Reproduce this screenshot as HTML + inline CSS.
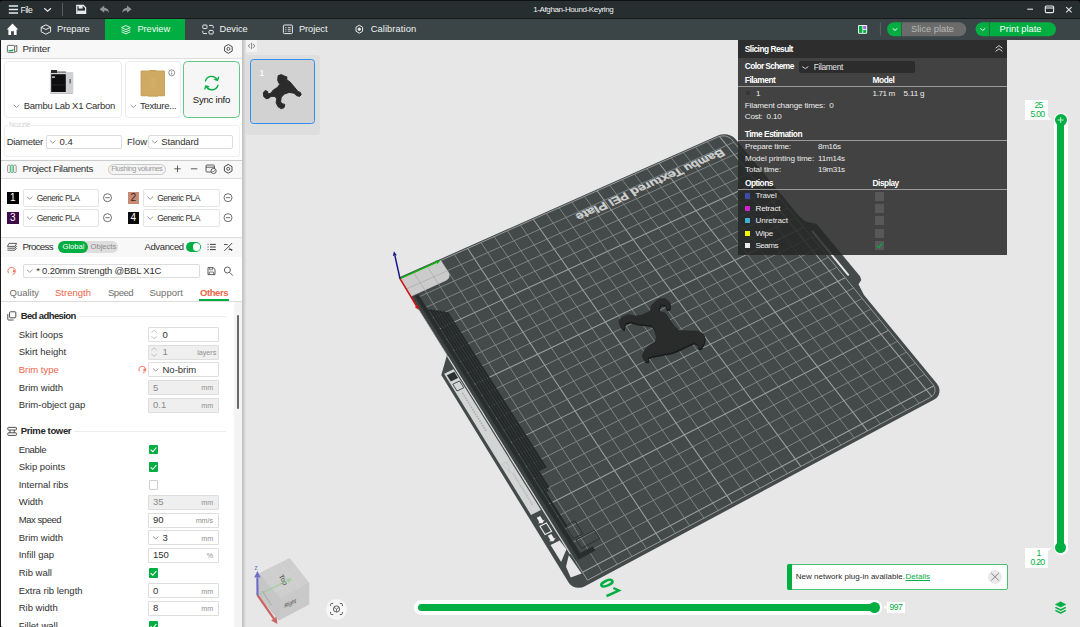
<!DOCTYPE html>
<html>
<head>
<meta charset="utf-8">
<style>
*{box-sizing:border-box;margin:0;padding:0}
html,body{width:1080px;height:627px;overflow:hidden;background:#e7e7e7;font-family:"Liberation Sans",sans-serif;font-size:9.5px;color:#303030}
.abs,.t,.b{position:absolute}
.t{white-space:pre;line-height:12px;height:12px;margin-top:-6px}
#titlebar{position:absolute;left:0;top:0;width:1080px;height:19px;background:#262e30;border-top:1px solid #0f1213;border-bottom:1px solid #15191a}
#tabbar{position:absolute;left:0;top:19px;width:1080px;height:21px;background:#3b4446}
#side{position:absolute;left:0;top:40px;width:242px;height:587px;background:#fff;overflow:hidden}
#sidegap{position:absolute;left:242px;top:40px;width:3.6px;height:587px;background:linear-gradient(to right,#c0c0c0,#cdcdcd 45%,#dedede 85%,#e7e7e7)}
#canvas{position:absolute;left:0;top:0;width:1080px;height:627px}
svg{position:absolute;overflow:visible}

</style>
</head>
<body>
<svg id="canvas" width="1080" height="627" viewBox="0 0 1080 627">
<path d="M398.8 277.5 L718.0 135.5 L721.0 134.5 L724.3 134.2 L727.5 134.5 L730.6 135.4 L733.3 136.9 L735.4 138.9 L798.1 215.1 L805.2 221.2 L816.7 224.0 L860.0 276.2 L861.3 279.9 L858.5 284.2 L863.8 294.8 L936.8 383.5 L938.6 386.3 L939.5 389.4 L939.4 392.5 L938.4 395.4 L936.5 397.9 L933.8 399.8 L584.9 586.2 L582.0 587.4 L578.8 587.8 L575.7 587.5 L572.9 586.4 L570.4 584.7 L568.6 582.5 L441.3 375.0 L447.0 355.0Z" fill="#44494a"/>
<path d="M550.6 544.9 L561.1 561.9 L566.5 549.3 L559.6 540.4Z" fill="#e7e7e7"/>
<path d="M568.8 555.2 L566.0 566.7 L570.7 577.6 L581.6 573.6Z" fill="#e7e7e7"/>
<path d="M444.1 373.7 L531.0 514.9 L540.9 509.9 L453.6 369.2Z" fill="#d3d4d4"/>
<path d="M446.9 375.3 L450.8 381.5 L458.1 378.0 L454.3 371.8Z" fill="#2c2f30"/>
<path d="M452.8 384.2 L457.0 391.0 L463.8 387.8 L459.6 381.0Z" fill="none" stroke="#2c2f30" stroke-width="0.8"/>
<path d="M462.5 392.9 L486.3 431.3" stroke="#a9abab" stroke-width="1.6" stroke-dasharray="1.5 1.2"/>
<path d="M513.0 473.2 L533.0 505.6" stroke="#b4b6b6" stroke-width="1.8" stroke-dasharray="1 1"/>
<path d="M502.1 464.3 L510.5 472.9 L507.1 461.8Z" fill="none" stroke="#bcbebe" stroke-width="0.6"/>
<path d="M539.9 526.3 L545.1 534.6 L551.6 531.2 L546.4 522.9Z" fill="none" stroke="#eeeeee" stroke-width="1.1"/>
<path d="M536.7 517.8 L539.4 522.3 L537.7 523.2 L542.4 523.3 L544.8 519.6 L543.0 520.5 L540.2 516.0Z" fill="#eeeeee"/>
<path d="M547.8 535.8 L550.5 540.3 L548.8 541.2 L553.5 541.3 L555.9 537.5 L554.1 538.5 L551.3 533.9Z" fill="#eeeeee"/>
<path d="M812.5 231.5 L848.2 274.8" stroke="#e7e7e7" stroke-width="2" stroke-linecap="round"/>
<path d="M406.5 289.0 L733.9 142.2 M413.7 272.5 L602.4 572.3 M413.0 299.6 L741.4 151.4 M427.3 266.4 L617.2 564.4 M419.6 310.2 L749.0 160.6 M440.8 260.4 L631.9 556.5 M426.3 320.9 L756.6 169.9 M454.3 254.4 L646.5 548.7 M439.8 342.7 L772.1 188.7 M481.0 242.5 L675.4 533.3 M446.7 353.7 L779.9 198.2 M494.2 236.7 L689.7 525.7 M453.6 364.8 L787.8 207.9 M507.3 230.8 L703.9 518.1 M460.6 376.1 L795.8 217.6 M520.4 225.0 L718.1 510.6 M474.8 398.9 L812.0 237.2 M546.3 213.5 L746.0 495.7 M482.0 410.5 L820.2 247.2 M559.1 207.8 L759.9 488.3 M489.3 422.2 L828.4 257.3 M571.8 202.1 L773.6 481.0 M496.6 434.0 L836.8 267.4 M584.5 196.4 L787.3 473.7 M511.5 458.0 L853.7 288.0 M609.7 185.2 L814.3 459.2 M519.1 470.2 L862.3 298.5 M622.2 179.7 L827.7 452.1 M526.8 482.5 L870.9 309.0 M634.5 174.1 L841.0 445.0 M534.5 494.9 L879.7 319.7 M646.9 168.7 L854.3 437.9 M550.2 520.1 L897.4 341.3 M671.3 157.8 L880.5 424.0 M558.1 533.0 L906.4 352.2 M683.4 152.4 L893.5 417.1 M566.2 545.9 L915.5 363.3 M695.5 147.0 L906.4 410.2 M574.3 559.0 L924.6 374.4 M707.5 141.7 L919.2 403.3" stroke="#878c8a" stroke-width="0.85" fill="none"/>
<path d="M433.0 331.7 L764.3 179.2 M467.7 248.5 L661.0 541.0 M467.7 387.5 L803.8 227.4 M533.3 219.2 L732.1 503.1 M504.0 446.0 L845.2 277.7 M597.1 190.8 L800.8 466.4 M542.3 507.5 L888.5 330.4 M659.1 163.2 L867.4 430.9 M582.5 572.2 L933.9 385.7 M719.4 136.4 L931.9 396.6" stroke="#9a9f9d" stroke-width="1.05" fill="none"/>
<path d="M400.0 278.6 L718.2 136.9 L720.5 136.2 L723.0 135.9 L725.6 136.1 L728.0 136.9 L730.1 138.0 L731.7 139.5 L933.0 384.6 L934.4 386.8 L935.0 389.2 L935.0 391.5 L934.2 393.8 L932.7 395.7 L930.6 397.2 L587.5 580.2Z" stroke="#9da19f" stroke-width="0.9" fill="none"/>
<path d="M447.0 356.4 L569.9 554.3 L570.8 553.9 L447.9 356.0Z" fill="#e2e3e3"/>
<path d="M411.9 297.4 L575.8 561.0 L579.2 559.2 L415.0 295.9Z" fill="#3c4142"/>
<path d="M414.7 296.1 L578.9 559.4 L595.5 550.6 L592.8 546.4 L580.3 553.1 L418.5 294.4Z" fill="#2a2d2e"/>
<path d="M429.2 309.9 L565.4 527.5 L567.6 526.4 L431.3 309.0Z" fill="#26292a"/>
<path d="M432.5 310.5 L546.5 492.1 L548.7 491.0 L434.6 309.5Z" fill="#26292a"/>
<path d="M435.9 311.0 L547.4 488.4 L549.6 487.3 L438.0 310.1Z" fill="#26292a"/>
<path d="M439.2 311.5 L539.8 471.1 L541.9 470.0 L441.3 310.6Z" fill="#26292a"/>
<path d="M442.6 312.1 L542.2 469.8 L544.4 468.8 L444.7 311.1Z" fill="#26292a"/>
<path d="M446.0 312.6 L544.7 468.6 L546.8 467.5 L448.0 311.7Z" fill="#26292a"/>
<path d="M427.4 310.7 L448.2 313.7 L449.3 313.2 L427.1 309.5Z" fill="#26292a"/>
<path d="M565.4 525.8 L573.4 538.7 L583.0 533.7 L574.9 520.9Z" fill="none" stroke="#2b2e2f" stroke-width="0.9"/>
<path d="M576.1 539.8 L581.4 548.3 L599.8 538.6 L594.5 530.2Z" fill="none" stroke="#2b2e2f" stroke-width="0.9"/>
<path d="M400.0 278.6 L440.8 260.4 L448.8 272.7 L449.4 274.2 L449.5 275.7 L449.2 277.3 L448.3 278.7 L447.0 280.0 L445.3 281.0 L411.1 296.4Z" fill="#cbcbcb"/>
<path d="M406.5 289.0 L447.5 270.7 M413.7 272.5 L424.8 290.2 M427.3 266.4 L438.5 284.0" stroke="#a9a9a9" stroke-width="0.7" fill="none"/>
<g font-family="Liberation Sans" font-weight="bold" font-size="9.4" fill="#cfd1d0" stroke="#cfd1d0" stroke-width="0.25">
<text transform="matrix(-1.2068 0.5423 -0.7405 -0.9252 721.3 148.9)" textLength="32.0" lengthAdjust="spacingAndGlyphs">Bambu</text>
<text transform="matrix(-1.2338 0.5544 -0.7277 -0.9449 680.1 167.3)" textLength="41.4" lengthAdjust="spacingAndGlyphs">Textured</text>
<text transform="matrix(-1.2558 0.5643 -0.7171 -0.9610 625.3 192.0)" textLength="14.3" lengthAdjust="spacingAndGlyphs">PEI</text>
<text transform="matrix(-1.2714 0.5713 -0.7094 -0.9724 604.3 201.4)" textLength="23.5" lengthAdjust="spacingAndGlyphs">Plate</text>
</g>
<path d="M653.1 303.7 L658.8 298.6 L665.3 298.6 L669.6 302.2 L669.6 308.7 L666.7 309.4 L665.3 305.1 L661.0 304.4 L658.8 308.7 L659.5 311.6 L665.3 313.0 L668.8 318.7 L673.9 325.9 L678.9 330.2 L688.2 330.9 L697.6 330.9 L703.3 333.8 L704.7 338.1 L704.0 342.4 L701.1 348.2 L698.3 348.2 L697.6 344.6 L694.0 342.4 L687.5 345.3 L678.9 349.6 L671.7 352.5 L663.1 353.9 L653.1 356.0 L648.0 357.5 L648.0 361.8 L645.2 361.1 L642.3 355.3 L644.4 350.3 L649.5 345.3 L655.2 341.7 L656.6 336.7 L654.5 329.5 L651.6 325.2 L645.9 324.5 L638.0 323.8 L630.1 321.6 L625.1 323.0 L623.6 329.5 L620.8 326.6 L618.9 320.9 L621.5 317.3 L628.7 314.4 L635.1 315.9 L641.6 315.1 L648.0 312.3 L650.9 310.1 L650.9 306.5Z" transform="translate(0.5,1.3)" fill="#191a1a" stroke="#191a1a" stroke-width="1" stroke-linejoin="round"/><path d="M653.1 303.7 L658.8 298.6 L665.3 298.6 L669.6 302.2 L669.6 308.7 L666.7 309.4 L665.3 305.1 L661.0 304.4 L658.8 308.7 L659.5 311.6 L665.3 313.0 L668.8 318.7 L673.9 325.9 L678.9 330.2 L688.2 330.9 L697.6 330.9 L703.3 333.8 L704.7 338.1 L704.0 342.4 L701.1 348.2 L698.3 348.2 L697.6 344.6 L694.0 342.4 L687.5 345.3 L678.9 349.6 L671.7 352.5 L663.1 353.9 L653.1 356.0 L648.0 357.5 L648.0 361.8 L645.2 361.1 L642.3 355.3 L644.4 350.3 L649.5 345.3 L655.2 341.7 L656.6 336.7 L654.5 329.5 L651.6 325.2 L645.9 324.5 L638.0 323.8 L630.1 321.6 L625.1 323.0 L623.6 329.5 L620.8 326.6 L618.9 320.9 L621.5 317.3 L628.7 314.4 L635.1 315.9 L641.6 315.1 L648.0 312.3 L650.9 310.1 L650.9 306.5Z" fill="#2a2b2b" stroke="#2a2b2b" stroke-width="0.6" stroke-linejoin="round"/>

</svg>
<div class="b" style="left:246.0px;top:40.0px;width:11.0px;height:11.8px;background:#f3f3f3"></div>
<div class="b" style="left:246.0px;top:55.0px;width:74.3px;height:80.0px;background:#dedede;border-radius:0 3px 3px 0"></div>
<div class="b" style="left:249.8px;top:59.0px;width:65.0px;height:65.3px;background:#d2d2d2;border:1.6px solid #2f8ef0;border-radius:3.5px"></div>
<div class="t" style="left:259.3px;top:72.6px;font-size:9.5px;color:#fff;">1</div>
<div class="b" style="left:1053.5px;top:112.7px;width:14.4px;height:442.0px;background:#fff;border-radius:7.2px"></div>
<div class="b" style="left:1057.1px;top:119.0px;width:7.0px;height:430.0px;background:#00ae42"></div>
<div class="b" style="left:1054.8px;top:114.1px;width:11.8px;height:11.8px;background:#00ae42;border-radius:6px"></div>
<div class="b" style="left:1054.7px;top:541.7px;width:11.6px;height:11.6px;background:#00ae42;border-radius:6px"></div>
<div class="b" style="left:1025.2px;top:100.0px;width:22.7px;height:19.9px;background:#fff"></div>
<div class="t" style="left:1034.4px;top:105.2px;font-size:8.6px;color:#00ae42;letter-spacing:-0.6px">25</div>
<div class="t" style="left:1030.4px;top:113.9px;font-size:8.6px;color:#00ae42;letter-spacing:-0.7px">5.00</div>
<div class="b" style="left:1025.2px;top:547.9px;width:22.7px;height:19.7px;background:#fff"></div>
<div class="t" style="left:1036.4px;top:553.1px;font-size:8.6px;color:#00ae42;">1</div>
<div class="t" style="left:1030.4px;top:561.9px;font-size:8.6px;color:#00ae42;letter-spacing:-0.7px">0.20</div>
<div class="b" style="left:414.4px;top:600.4px;width:467.7px;height:14.6px;background:#fff;border-radius:7.3px"></div>
<div class="b" style="left:418.0px;top:603.8px;width:456.0px;height:7.3px;background:#00ae42;border-radius:3.6px 0 0 3.6px"></div>
<div class="b" style="left:868.9px;top:601.7px;width:11.4px;height:11.4px;background:#00ae42;border-radius:5.7px"></div>
<div class="b" style="left:886.6px;top:602.0px;width:18.5px;height:10.7px;background:#fff"></div>
<div class="t" style="left:889.5px;top:607.4px;font-size:8.6px;color:#00ae42;letter-spacing:-0.55px">997</div>
<div class="b" style="left:787.4px;top:563.6px;width:220.4px;height:26.0px;background:#fff;border:1px solid #49c173;border-radius:2px"></div>
<div class="b" style="left:787.4px;top:563.6px;width:4.4px;height:26.0px;background:#00ae42;border-radius:2px 0 0 2px"></div>
<div class="t" style="left:795.8px;top:576.8px;font-size:8px;color:#2a2a2a;letter-spacing:0.02px">New network plug-in available.</div>
<div class="t" style="left:905.6px;top:576.8px;font-size:8px;color:#00ae42;text-decoration:underline">Details</div>
<div class="b" style="left:988.2px;top:570.0px;width:13.6px;height:13.6px;background:#e9e9e9;border-radius:7px"></div>
<div class="b" style="left:326.0px;top:598.6px;width:21.0px;height:21.0px;background:#f6f6f6;border-radius:10.5px"></div>
<svg class="abs" style="left:0;top:0" width="1080" height="627" viewBox="0 0 1080 627">
<path d="M251.6 42.8V49M250.2 44L248.2 45.9L250.2 47.8M253 44L255 45.9L253 47.8" fill="none" stroke="#555" stroke-width="0.7"/>
<path d="M1057.7 120H1063.7M1060.7 117V123" stroke="#d9f3e2" stroke-width="0.9" fill="none"/>
<path d="M1047.9 116.6L1051.6 119.9H1047.9ZM1047.9 551.2L1051.6 547.9H1047.9Z" fill="#fff"/>
<path d="M886.6 605.2L883.6 607.3L886.6 609.4Z" fill="#fff"/>
<path d="M991.2 573L998.8 580.6M998.8 573L991.2 580.6" stroke="#7d7d7d" stroke-width="0.9" fill="none"/>
<g fill="#00ae42" stroke="#00ae42" stroke-width="0.6" stroke-linejoin="round"><path d="M1055.4 604.4L1060.6 601.8L1065.8 604.4L1060.6 607Z"/><path d="M1055.4 607.4L1060.6 610L1065.8 607.4" fill="none" stroke-width="1.4"/><path d="M1055.4 610.4L1060.6 613L1065.8 610.4" fill="none" stroke-width="1.4"/></g>
<g fill="none" stroke="#4d4d4d" stroke-width="0.9"><path d="M330.6 606V604.6Q330.6 603.4 331.8 603.4H333.2M339.8 603.4H341.2Q342.4 603.4 342.4 604.6V606M342.4 612V613.4Q342.4 614.6 341.2 614.6H339.8M333.2 614.6H331.8Q330.6 614.6 330.6 613.4V612"/><circle cx="336.5" cy="609" r="3.1"/><path d="M336.5 609V612M336.5 609L334 607.4M336.5 609L339 607.4" stroke-width="0.7"/></g>
</svg>
<svg class="abs" style="left:0;top:0" width="1080" height="627" viewBox="0 0 1080 627">
<g opacity="1"><path d="M400.0 278.6L436.4 262.2" stroke="#0db10d" stroke-width="1.5"/><path d="M440.5 260.4L437.2 264.1L435.6 260.4Z" fill="#0db10d"/></g>
<g opacity="1"><path d="M400.0 278.6L416.5 306.0" stroke="#cf1212" stroke-width="1.5"/><path d="M418.8 309.9L414.8 307.1L418.2 305.0Z" fill="#cf1212"/></g>
<g opacity="1"><path d="M400.0 278.6L394.9 255.6" stroke="#16168a" stroke-width="1.5"/><path d="M393.9 251.2L396.8 255.2L392.9 256.0Z" fill="#16168a"/></g>
<g transform="matrix(0.537 0.843 -0.906 0.423 606.9 583.2)" fill="none" stroke="#00ae42" stroke-width="2.5"><ellipse cx="0" cy="0" rx="2.5" ry="5.9"/><path d="M11.7 7.3V-6.2L7.2 -2.9" stroke-linejoin="miter"/></g>
<path d="M259.0 573.4 L289.6 558.2 L309.1 583.1 L309.1 604.3 L278.7 620.4 L257.5 595.2Z" fill="#c6c6c6"/>
<path d="M259.0 573.4 L289.6 558.2 L309.1 583.1 L280.8 598.4Z" fill="#cecece"/>
<path d="M280.8 598.4 L309.1 583.1 L309.1 604.3 L278.7 620.4Z" fill="#c9c9c9"/>
<path d="M267.2 583.7 L298.2 568.5 M274.1 591.7 L305.1 576.8 M269.5 567.6 L291.3 592.9 M279.3 562.8 L300.5 588.3" stroke="#d6d6d6" stroke-width="0.5" fill="none"/>
<text transform="translate(278.5,575.9) rotate(62)" font-family="Liberation Sans" font-size="7" fill="#4a4a4a">Top</text>
<text transform="translate(284.4,608.0) rotate(-25) skewX(-20)" font-family="Liberation Sans" font-style="italic" font-size="5.6" fill="#4c4c4c">Right</text>
<path d="M262.4 591.1 L271.2 604.9" stroke="#6a6a6a" stroke-width="0.5" stroke-dasharray="1.4 0.5"/>
<g opacity="0.75"><path d="M257.5 595.2L287.4 580.7" stroke="#8fd08f" stroke-width="1.2"/><path d="M291.9 578.5L288.4 582.7L286.4 578.7Z" fill="#8fd08f"/></g>
<g opacity="1"><path d="M257.5 595.2L273.8 618.6" stroke="#c86464" stroke-width="2.2"/><path d="M277.5 623.9L271.2 620.4L276.4 616.7Z" fill="#c86464"/></g>
<g opacity="1"><path d="M257.5 595.2L257.4 577.5" stroke="#6e6ec8" stroke-width="2.2"/><path d="M257.4 571.0L260.6 577.5L254.2 577.5Z" fill="#6e6ec8"/></g>
<text x="254.6" y="570.4" font-family="Liberation Sans" font-weight="bold" font-size="5" fill="#7a7ad0">Z</text>
<path d="M278.1 75.7 L281.3 74.6 L284.4 76.1 L286.8 76.8 L286.8 79.7 L290.0 82.0 L294.8 87.6 L298.0 91.6 L300.4 92.4 L301.2 94.8 L299.6 96.4 L296.4 95.6 L294.0 93.2 L289.2 92.4 L284.4 94.0 L281.3 97.2 L280.5 102.0 L282.8 103.9 L284.8 104.4 L284.1 107.6 L281.3 108.7 L278.1 106.8 L276.1 102.8 L276.8 98.8 L274.9 96.4 L270.9 96.4 L269.3 98.0 L266.1 98.8 L263.7 96.4 L263.4 92.4 L265.3 90.5 L267.7 91.6 L267.7 94.0 L270.9 93.2 L273.3 90.0 L277.3 87.6 L279.7 84.4 L277.7 80.5Z" fill="#2b2b2b" stroke="#2b2b2b" stroke-width="1" stroke-linejoin="round"/>
</svg>
<div id="titlebar">
<svg class="abs" style="left:0;top:-1px" width="1080" height="19" viewBox="0 0 1080 19">
<g fill="none" stroke="#e8eaea" stroke-width="1.3">
<path d="M8.8 5.9H18.1M8.8 9.4H18.1M8.8 12.9H18.1" stroke-width="1.5"/>
<path d="M44.2 8.2L47.6 11.3L51 8.2" stroke-width="1.2"/>
<path d="M62.5 3V16" stroke="#565d5f" stroke-width="1"/>
<path d="M76.8 5.5H83.3L85.6 7.8V13.4H76.8Z" stroke-width="1.3"/>
<path d="M78.6 5.7V8.6H82.6V5.7" fill="#e8eaea" stroke="none"/>
<path d="M77.4 10.6H85V13H77.4Z" fill="#e8eaea" stroke="none"/>
</g>
<path d="M99.6 9.2L104.2 5.6V7.8C107.2 7.9 108.9 9.8 109 13C107.9 11.3 106.4 10.6 104.2 10.6V12.8Z" fill="#8f9596"/>
<path d="M131.6 9.2L127 5.6V7.8C124 7.9 122.3 9.8 122.2 13C123.3 11.3 124.8 10.6 127 10.6V12.8Z" fill="#8f9596"/>
<g fill="none" stroke="#e8eaea" stroke-width="1.1">
<path d="M1027.3 9.2H1033"/>
<rect x="1045.3" y="6" width="8.3" height="6.6" rx="1"/><path d="M1045.3 8H1053.6"/>
<path d="M1066.2 7.2L1071.6 12.4M1071.6 7.2L1066.2 12.4"/>
</g>
</svg>
<div class="t" style="left:20.5px;top:9px;font-size:8.6px;color:#f0f1f1;letter-spacing:-0.55px">File</div>
<div class="t" style="left:533.2px;top:9px;font-size:8px;color:#f0f1f1;letter-spacing:-0.38px">1-Afghan-Hound-Keyring</div>

</div>
<div id="tabbar">
<div class="abs" style="left:104.5px;top:0;width:80.5px;height:21px;background:#00ae42"></div>
<svg class="abs" style="left:0;top:-19px" width="1080" height="40" viewBox="0 0 1080 40">
<path d="M6.8 29.6L12.5 23.6L18.2 29.6H16.6V35H13.9V31.2H11.1V35H8.4V29.6Z" fill="#fff"/>
<g fill="none" stroke="#e9ebeb" stroke-width="1" stroke-linejoin="round">
<path d="M41.2 27.2L45.9 24.8L50.6 27.2V31.8L45.9 34.2L41.2 31.8ZM41.2 27.2L45.9 29.5L50.6 27.2"/>
<g stroke="#e6f7ec" stroke-width="0.95"><path d="M121.5 27.6L125.9 25.6L130.3 27.6L125.9 29.6ZM121.5 29.7L125.9 31.7L130.3 29.7M121.5 31.8L125.9 33.8L130.3 31.8"/></g>
<rect x="202.8" y="25" width="4.2" height="3.6" rx="0.8"/><rect x="209" y="30.4" width="4.2" height="3.6" rx="0.8"/><path d="M209 25.4H212.2Q213.2 25.4 213.2 26.4V28.2M207 33.6H203.8Q202.8 33.6 202.8 32.6V30.8"/>
<rect x="283.4" y="25" width="9" height="8.6" rx="1"/><path d="M285.2 27.6H286.4M285.2 29.4H286.4M285.2 31.2H286.4M287.8 27.6H290.8M287.8 29.4H290.8M287.8 31.2H290.8" stroke-width="0.8"/>
<path d="M359.3 25.2L362.6 27.2V31.2L359.3 33.2L356 31.2V27.2Z"/><circle cx="359.3" cy="29.2" r="1.2" fill="#e9ebeb"/>
<path d="M880.4 22.7V35.6" stroke="#5b6365"/>
</g>
<rect x="858" y="25" width="9.2" height="8.8" rx="1.2" fill="#ffffff"/>
<rect x="858.9" y="25.9" width="3.5" height="7" fill="#00ae42"/><rect x="863.2" y="29.8" width="3.1" height="3.1" fill="#00ae42"/><rect x="863.2" y="25.9" width="3.1" height="3.1" fill="#a06be6"/>
<!-- slice plate -->
<path d="M894.1 22.2H901.2V36.2H894.1A7 7 0 0 1 894.1 22.2Z" fill="#00ae42"/>
<path d="M901.8 22.2H959.2A7 7 0 0 1 959.2 36.2H901.8Z" fill="#6b6b6b"/>
<path d="M982.6 22.2H989V36.2H982.6A7 7 0 0 1 982.6 22.2Z" fill="#00ae42"/>
<path d="M989.6 22.2H1049A7 7 0 0 1 1049 36.2H989.6Z" fill="#00ae42"/>
<path d="M892.6 28.4L895 30.4L897.4 28.4M980.4 28.4L982.8 30.4L985.2 28.4" fill="none" stroke="#fff" stroke-width="1"/>
</svg>
<div class="t" style="left:57px;top:10.2px;font-size:9.3px;color:#f2f3f3;letter-spacing:-0.05px">Prepare</div>
<div class="t" style="left:137.4px;top:10.2px;font-size:9.3px;color:#f2fbf5;letter-spacing:-0.05px">Preview</div>
<div class="t" style="left:219.5px;top:10.2px;font-size:9.3px;color:#f2f3f3;letter-spacing:-0.05px">Device</div>
<div class="t" style="left:298.9px;top:10.2px;font-size:9.3px;color:#f2f3f3;letter-spacing:-0.05px">Project</div>
<div class="t" style="left:370.7px;top:10.2px;font-size:9.3px;color:#f2f3f3;letter-spacing:0.1px">Calibration</div>
<div class="t" style="left:911.1px;top:10.2px;font-size:9.3px;color:#b8b8b8">Slice plate</div>
<div class="t" style="left:999.6px;top:10.2px;font-size:9.3px;color:#fff">Print plate</div>

</div>
<div id="side">
<div class="b" style="left:1.0px;top:0.0px;width:241.0px;height:18.5px;background:#f8f8f8;border-bottom:1px solid #dedede"></div>
<div class="b" style="left:1.0px;top:120.0px;width:241.0px;height:18.5px;background:#f8f8f8;border-bottom:1px solid #dedede;border-top:1px solid #c9cdcc"></div>
<div class="b" style="left:1.0px;top:196.5px;width:241.0px;height:20.0px;background:#f8f8f8;border-top:1px solid #dedede"></div>
<div class="t" style="left:22.5px;top:9.2px;font-size:9.8px;color:#303030;;letter-spacing:-0.195px">Printer</div>
<div class="b" style="left:4.0px;top:21.2px;width:118.0px;height:57.0px;border:1px solid #ececec;border-radius:4px;background:#fff"></div>
<div class="b" style="left:125.0px;top:21.2px;width:55.5px;height:57.0px;border:1px solid #ececec;border-radius:4px;background:#fff"></div>
<div class="b" style="left:183.4px;top:21.2px;width:56.7px;height:57.0px;border:1px solid #62c784;border-radius:4.5px;background:#f6f6f6"></div>
<div class="t" style="left:23.7px;top:66.2px;font-size:9.5px;color:#303030;;letter-spacing:-0.281px">Bambu Lab X1 Carbon</div>
<div class="t" style="left:140.0px;top:66.2px;font-size:9.5px;color:#303030;;letter-spacing:-0.267px">Texture...</div>
<div class="t" style="left:192.8px;top:60.4px;font-size:9.6px;color:#161616;;letter-spacing:-0.254px">Sync info</div>
<div class="b" style="left:4.0px;top:85.0px;width:235.5px;height:32.0px;border:1px solid #efefef;border-radius:3px"></div>
<div class="b" style="left:8.0px;top:81.0px;width:22.0px;height:8.0px;background:#fff"></div>
<div class="t" style="left:9.0px;top:84.8px;font-size:7px;color:#d2d2d2;">Nozzle</div>
<div class="t" style="left:6.7px;top:101.8px;font-size:9.5px;color:#303030;;letter-spacing:-0.279px">Diameter</div>
<div class="b" style="left:45.5px;top:94.5px;width:76.2px;height:14.8px;border:1px solid #dcdcdc;border-radius:2px"></div>
<div class="t" style="left:59.5px;top:101.8px;font-size:9.5px;color:#303030;">0.4</div>
<div class="t" style="left:127.0px;top:101.8px;font-size:9.5px;color:#303030;">Flow</div>
<div class="b" style="left:147.5px;top:94.5px;width:85.0px;height:14.8px;border:1px solid #dcdcdc;border-radius:2px"></div>
<div class="t" style="left:161.2px;top:101.8px;font-size:9.5px;color:#303030;;letter-spacing:-0.132px">Standard</div>
<div class="t" style="left:22.5px;top:128.8px;font-size:9.8px;color:#303030;;letter-spacing:-0.306px">Project Filaments</div>
<div class="b" style="left:107.5px;top:123.6px;width:58.2px;height:11.0px;border:1px solid #c9c9c9;border-radius:6px;background:#f4f4f4"></div>
<div class="t" style="left:111.2px;top:129.0px;font-size:7.4px;color:#9a9a9a;;letter-spacing:-0.392px">Flushing volumes</div>
<div class="b" style="left:7.0px;top:152.2px;width:11.7px;height:11.6px;background:#000"></div>
<div class="t" style="left:10.1px;top:158.3px;font-size:10px;color:#fff;">1</div>
<div class="b" style="left:22.5px;top:149.2px;width:76.9px;height:17.4px;border:1px solid #e4e4e4;border-radius:2px"></div>
<div class="t" style="left:36.7px;top:158.0px;font-size:8.5px;color:#303030;;letter-spacing:-0.490px">Generic PLA</div>
<div class="b" style="left:127.5px;top:152.2px;width:11.7px;height:11.6px;background:#c98a74"></div>
<div class="t" style="left:130.6px;top:158.3px;font-size:10px;color:#2a2a2a;">2</div>
<div class="b" style="left:143.0px;top:149.2px;width:76.9px;height:17.4px;border:1px solid #e4e4e4;border-radius:2px"></div>
<div class="t" style="left:157.2px;top:158.0px;font-size:8.5px;color:#303030;;letter-spacing:-0.490px">Generic PLA</div>
<div class="b" style="left:7.0px;top:172.2px;width:11.7px;height:11.6px;background:#3e0a48"></div>
<div class="t" style="left:10.1px;top:178.3px;font-size:10px;color:#fff;">3</div>
<div class="b" style="left:22.5px;top:169.2px;width:76.9px;height:17.4px;border:1px solid #e4e4e4;border-radius:2px"></div>
<div class="t" style="left:36.7px;top:178.0px;font-size:8.5px;color:#303030;;letter-spacing:-0.490px">Generic PLA</div>
<div class="b" style="left:127.5px;top:172.2px;width:11.7px;height:11.6px;background:#0a0a0a"></div>
<div class="t" style="left:130.6px;top:178.3px;font-size:10px;color:#fff;">4</div>
<div class="b" style="left:143.0px;top:169.2px;width:76.9px;height:17.4px;border:1px solid #e4e4e4;border-radius:2px"></div>
<div class="t" style="left:157.2px;top:178.0px;font-size:8.5px;color:#303030;;letter-spacing:-0.490px">Generic PLA</div>
<div class="t" style="left:22.5px;top:206.6px;font-size:9.8px;color:#303030;;letter-spacing:-0.700px">Process</div>
<div class="b" style="left:57.5px;top:201.2px;width:60.0px;height:11.8px;background:#dedede;border-radius:6px"></div>
<div class="b" style="left:57.5px;top:201.2px;width:30.8px;height:11.8px;background:#00ae42;border-radius:6px"></div>
<div class="t" style="left:62.5px;top:207.2px;font-size:7.6px;color:#fff;">Global</div>
<div class="t" style="left:90.5px;top:207.2px;font-size:7.6px;color:#8c8c8c;">Objects</div>
<div class="t" style="left:144.5px;top:206.6px;font-size:9.5px;color:#303030;;letter-spacing:-0.381px">Advanced</div>
<div class="b" style="left:185.5px;top:202.4px;width:15.8px;height:9.4px;background:#00ae42;border-radius:5px"></div>
<div class="b" style="left:193.2px;top:203.4px;width:7.2px;height:7.4px;background:#fff;border-radius:4px"></div>
<div class="b" style="left:22.5px;top:223.7px;width:177.0px;height:14.6px;border:1px solid #dcdcdc;border-radius:2px"></div>
<div class="t" style="left:36.2px;top:231.2px;font-size:9.5px;color:#303030;;letter-spacing:-0.200px">* 0.20mm Strength @BBL X1C</div>
<div class="t" style="left:9.5px;top:252.5px;font-size:9.5px;color:#6e6e6e;">Quality</div>
<div class="t" style="left:55.0px;top:252.5px;font-size:9.5px;color:#f0654a;">Strength</div>
<div class="t" style="left:108.0px;top:252.5px;font-size:9.5px;color:#6e6e6e;;letter-spacing:-0.494px">Speed</div>
<div class="t" style="left:149.5px;top:252.5px;font-size:9.5px;color:#6e6e6e;">Support</div>
<div class="t" style="left:200.0px;top:252.5px;font-size:9.5px;color:#f0654a;font-weight:bold;letter-spacing:-0.436px">Others</div>
<div class="b" style="left:1.0px;top:260.6px;width:241.0px;height:1.0px;background:#dcdcdc"></div>
<div class="b" style="left:198.7px;top:258.6px;width:30.8px;height:2.2px;background:#00ae42"></div>
<div class="b" style="left:233.6px;top:262.0px;width:8.4px;height:325.0px;background:#f4f4f4"></div>
<div class="b" style="left:236.8px;top:274.5px;width:2.0px;height:94.2px;background:#6a6a6a;border-radius:1px"></div>
<div class="t" style="left:20.7px;top:275.7px;font-size:9.5px;color:#262626;font-weight:bold;letter-spacing:-0.607px">Bed adhesion</div>
<div class="b" style="left:78.7px;top:275.5px;width:147.3px;height:1.0px;background:#ececec"></div>
<div class="t" style="left:20.7px;top:391.2px;font-size:9.5px;color:#262626;font-weight:bold;letter-spacing:-0.353px">Prime tower</div>
<div class="b" style="left:74.2px;top:391.0px;width:151.8px;height:1.0px;background:#ececec"></div>
<div class="t" style="left:18.7px;top:294.5px;font-size:9.5px;color:#303030;">Skirt loops</div>
<div class="b" style="left:148.2px;top:287.0px;width:70.5px;height:15.0px;border:1px solid #dedede;border-radius:1px;background:#fff"></div>
<div class="t" style="left:162.5px;top:294.5px;font-size:9.5px;color:#303030;">0</div>
<div class="t" style="left:18.7px;top:312.1px;font-size:9.5px;color:#303030;">Skirt height</div>
<div class="b" style="left:148.2px;top:304.6px;width:70.5px;height:15.0px;border:1px solid #dedede;border-radius:1px;background:#efefef"></div>
<div class="t" style="left:162.5px;top:312.1px;font-size:9.5px;color:#8a8a8a;">1</div>
<div class="t" style="right:25.7px;top:312.9px;font-size:7.2px;color:#8e8e8e">layers</div>
<div class="t" style="left:18.7px;top:329.8px;font-size:9.5px;color:#f0654a;">Brim type</div>
<div class="b" style="left:148.2px;top:322.3px;width:70.5px;height:15.0px;border:1px solid #dedede;border-radius:1px;background:#fff"></div>
<div class="t" style="left:162.5px;top:329.8px;font-size:9.5px;color:#303030;">No-brim</div>
<div class="t" style="left:18.7px;top:347.5px;font-size:9.5px;color:#303030;">Brim width</div>
<div class="b" style="left:148.2px;top:340.0px;width:70.5px;height:15.0px;border:1px solid #dedede;border-radius:1px;background:#efefef"></div>
<div class="t" style="left:153.0px;top:347.5px;font-size:9.5px;color:#8a8a8a;">5</div>
<div class="t" style="right:28.8px;top:348.3px;font-size:7.2px;color:#8e8e8e">mm</div>
<div class="t" style="left:18.7px;top:365.2px;font-size:9.5px;color:#303030;">Brim-object gap</div>
<div class="b" style="left:148.2px;top:357.7px;width:70.5px;height:15.0px;border:1px solid #dedede;border-radius:1px;background:#efefef"></div>
<div class="t" style="left:153.0px;top:365.2px;font-size:9.5px;color:#8a8a8a;">0.1</div>
<div class="t" style="right:28.8px;top:366.0px;font-size:7.2px;color:#8e8e8e">mm</div>
<div class="t" style="left:18.7px;top:409.5px;font-size:9.5px;color:#303030;;letter-spacing:-0.347px">Enable</div>
<div class="b" style="left:148.7px;top:404.8px;width:9.5px;height:9.5px;background:#00ae42;border-radius:1px"></div>
<div class="t" style="left:18.7px;top:427.1px;font-size:9.5px;color:#303030;">Skip points</div>
<div class="b" style="left:148.7px;top:422.4px;width:9.5px;height:9.5px;background:#00ae42;border-radius:1px"></div>
<div class="t" style="left:18.7px;top:444.8px;font-size:9.5px;color:#303030;">Internal ribs</div>
<div class="b" style="left:148.7px;top:440.1px;width:9.5px;height:9.5px;border:1px solid #cfcfcf;border-radius:1px;background:#fff"></div>
<div class="t" style="left:18.7px;top:462.4px;font-size:9.5px;color:#303030;">Width</div>
<div class="b" style="left:148.2px;top:454.9px;width:70.5px;height:15.0px;border:1px solid #dedede;border-radius:1px;background:#efefef"></div>
<div class="t" style="left:153.0px;top:462.4px;font-size:9.5px;color:#8a8a8a;">35</div>
<div class="t" style="right:28.8px;top:463.2px;font-size:7.2px;color:#8e8e8e">mm</div>
<div class="t" style="left:18.7px;top:480.1px;font-size:9.5px;color:#303030;;letter-spacing:-0.441px">Max speed</div>
<div class="b" style="left:148.2px;top:472.6px;width:70.5px;height:15.0px;border:1px solid #dedede;border-radius:1px;background:#fff"></div>
<div class="t" style="left:153.0px;top:480.1px;font-size:9.5px;color:#303030;">90</div>
<div class="t" style="right:28.8px;top:480.9px;font-size:7.2px;color:#8e8e8e">mm/s</div>
<div class="t" style="left:18.7px;top:497.8px;font-size:9.5px;color:#303030;">Brim width</div>
<div class="b" style="left:148.2px;top:490.2px;width:70.5px;height:15.0px;border:1px solid #dedede;border-radius:1px;background:#fff"></div>
<div class="t" style="left:162.5px;top:497.8px;font-size:9.5px;color:#303030;">3</div>
<div class="t" style="right:28.8px;top:498.6px;font-size:7.2px;color:#8e8e8e">mm</div>
<div class="t" style="left:18.7px;top:515.4px;font-size:9.5px;color:#303030;">Infill gap</div>
<div class="b" style="left:148.2px;top:507.9px;width:70.5px;height:15.0px;border:1px solid #dedede;border-radius:1px;background:#fff"></div>
<div class="t" style="left:153.0px;top:515.4px;font-size:9.5px;color:#303030;">150</div>
<div class="t" style="right:28.8px;top:516.2px;font-size:7.2px;color:#8e8e8e">%</div>
<div class="t" style="left:18.7px;top:533.0px;font-size:9.5px;color:#303030;">Rib wall</div>
<div class="b" style="left:148.7px;top:528.3px;width:9.5px;height:9.5px;background:#00ae42;border-radius:1px"></div>
<div class="t" style="left:18.7px;top:550.7px;font-size:9.5px;color:#303030;">Extra rib length</div>
<div class="b" style="left:148.2px;top:543.2px;width:70.5px;height:15.0px;border:1px solid #dedede;border-radius:1px;background:#fff"></div>
<div class="t" style="left:153.0px;top:550.7px;font-size:9.5px;color:#303030;">0</div>
<div class="t" style="right:28.8px;top:551.5px;font-size:7.2px;color:#8e8e8e">mm</div>
<div class="t" style="left:18.7px;top:568.4px;font-size:9.5px;color:#303030;">Rib width</div>
<div class="b" style="left:148.2px;top:560.9px;width:70.5px;height:15.0px;border:1px solid #dedede;border-radius:1px;background:#fff"></div>
<div class="t" style="left:153.0px;top:568.4px;font-size:9.5px;color:#303030;">8</div>
<div class="t" style="right:28.8px;top:569.1px;font-size:7.2px;color:#8e8e8e">mm</div>
<div class="t" style="left:18.7px;top:586.0px;font-size:9.5px;color:#303030;">Fillet wall</div>
<div class="b" style="left:148.7px;top:581.3px;width:9.5px;height:9.5px;background:#00ae42;border-radius:1px"></div>
<div class="b" style="left:0.0px;top:0.0px;width:1.0px;height:587.0px;background:#1a1a1a"></div>
<svg class="abs" style="left:0;top:-40px" width="242" height="627" viewBox="0 0 242 627">
<g fill="none" stroke="#5a5a5a" stroke-width="0.9"><rect x="7.4" y="45.4" width="7.2" height="7" rx="0.8"/><path d="M14.6 46.4L16.8 45.4V51.4L14.6 52.4"/><path d="M8.6 50.6H12.2L13.4 49.4" stroke="#00ae42" stroke-width="1.2"/></g>
<path d="M228.4 44.5 L232.2 46.7 L232.2 51.1 L228.4 53.3 L224.6 51.1 L224.6 46.7Z" fill="none" stroke="#4a4a4a" stroke-width="1" stroke-linejoin="round"/><circle cx="228.4" cy="48.9" r="1.5" fill="none" stroke="#4a4a4a" stroke-width="0.9"/>
<g><rect x="49.9" y="72" width="23.3" height="21.6" rx="0.8" fill="#d6d7da"/><rect x="51" y="70" width="6" height="3" fill="#2a2a2c"/><rect x="57" y="71.4" width="9" height="1.4" fill="#77787b"/><rect x="51.2" y="74.2" width="14.6" height="17.8" fill="#0e0e10"/><rect x="52" y="76.4" width="3" height="1.4" fill="#d8d8d8"/><rect x="52.2" y="84.6" width="12.6" height="0.8" fill="#2c2c2e"/><rect x="66.4" y="72.6" width="6.8" height="20.4" fill="#cfd0d3"/><rect x="69.6" y="79" width="1" height="4.4" fill="#3a3a3c"/><rect x="50.4" y="93.2" width="22.4" height="0.8" fill="#b9babd"/></g>
<g><rect x="140.6" y="70.6" width="24.4" height="25.6" rx="1" fill="#c8a25b"/><rect x="149.5" y="70" width="6.5" height="1.2" fill="#c8a25b"/><rect x="148" y="95.6" width="10" height="1" fill="#c8a25b"/><rect x="141.6" y="71.6" width="22.4" height="23.6" fill="#cfaa63"/><path d="M150.4 78.6h2.2v8h-2.2zM153.6 78.6h2.2v8h-2.2z" fill="none" stroke="#d9b875" stroke-width="0.5"/><circle cx="171.7" cy="72.8" r="3" fill="#fff" stroke="#6a6a6a" stroke-width="0.7"/><path d="M171.7 71.2V71.9M171.7 72.6V74.6" stroke="#6a6a6a" stroke-width="0.8"/></g>
<path d="M13.8 104.9L16.6 107.5L19.3 104.9" fill="none" stroke="#8a8a8a" stroke-width="0.9"/>
<path d="M130.6 104.9L133.3 107.5L136.1 104.9" fill="none" stroke="#8a8a8a" stroke-width="0.9"/>
<g fill="none" stroke="#00ae42" stroke-width="1.3" stroke-linecap="round" stroke-linejoin="round"><path d="M205.4 81A6.5 6.5 0 0 1 217.2 79.6"/><path d="M218 85.2A6.5 6.5 0 0 1 206.2 86.6"/><path d="M218.6 77.2L217.6 80.4L214.6 79.4M204.8 89L205.8 85.8L208.8 86.8"/></g>
<path d="M50.0 140.5L52.8 143.1L55.5 140.5" fill="none" stroke="#8a8a8a" stroke-width="0.9"/>
<path d="M152.0 140.5L154.8 143.1L157.5 140.5" fill="none" stroke="#8a8a8a" stroke-width="0.9"/>
<g fill="none" stroke-width="0.9"><rect x="7.6" y="165" width="2.6" height="7.6" rx="1.2" stroke="#8d8d8d"/><rect x="10.6" y="165" width="2.6" height="7.6" rx="1.2" stroke="#3dbd6c" fill="#bfe9cd"/><rect x="13.6" y="165" width="2.6" height="7.6" rx="1.2" stroke="#8d8d8d"/></g>
<g fill="none" stroke="#4a4a4a" stroke-width="0.9"><path d="M174.3 168.8H180.7M177.5 165.6V172M190.8 168.8H197.4"/><rect x="206" y="165" width="8.4" height="7" rx="1"/><path d="M206 167.2H214.4"/><circle cx="213.6" cy="171" r="2.6" fill="#f8f8f8"/><path d="M212.4 171L213.3 172L214.9 170.2" stroke-width="0.7"/></g>
<path d="M228.2 164.4 L232.0 166.6 L232.0 171.0 L228.2 173.2 L224.4 171.0 L224.4 166.6Z" fill="none" stroke="#4a4a4a" stroke-width="1" stroke-linejoin="round"/><circle cx="228.2" cy="168.8" r="1.5" fill="none" stroke="#4a4a4a" stroke-width="0.9"/>
<path d="M27.0 196.7L29.8 199.3L32.5 196.7" fill="none" stroke="#8a8a8a" stroke-width="0.9"/>
<g fill="none" stroke="#4a4a4a" stroke-width="0.8"><circle cx="107.5" cy="197.7" r="4"/><path d="M105.3 197.7H109.7"/></g>
<path d="M147.5 196.7L150.2 199.3L153.0 196.7" fill="none" stroke="#8a8a8a" stroke-width="0.9"/>
<g fill="none" stroke="#4a4a4a" stroke-width="0.8"><circle cx="228.0" cy="197.7" r="4"/><path d="M225.8 197.7H230.2"/></g>
<path d="M27.0 216.7L29.8 219.3L32.5 216.7" fill="none" stroke="#8a8a8a" stroke-width="0.9"/>
<g fill="none" stroke="#4a4a4a" stroke-width="0.8"><circle cx="107.5" cy="217.7" r="4"/><path d="M105.3 217.7H109.7"/></g>
<path d="M147.5 216.7L150.2 219.3L153.0 216.7" fill="none" stroke="#8a8a8a" stroke-width="0.9"/>
<g fill="none" stroke="#4a4a4a" stroke-width="0.8"><circle cx="228.0" cy="217.7" r="4"/><path d="M225.8 217.7H230.2"/></g>
<g fill="none" stroke="#4a4a4a" stroke-width="0.9" stroke-linejoin="round"><path d="M9 243.4H16.6L15 246.4H7.4ZM7.4 248.2H15L16.6 246M7.4 250.2H15L16.6 248"/></g>
<g fill="none" stroke="#3a3a3a" stroke-width="1"><path d="M210 244.4H215.8M210 247H215.8M210 249.6H215.8"/><path d="M207.6 244.4H208.6M207.6 247H208.6M207.6 249.6H208.6"/><path d="M224.4 250.8L232.2 243M224 244.6L227.6 244.6M228.6 249.6H232.4M229 247.4L232 251" stroke-width="0.9"/></g>
<g fill="none" stroke="#f0654a" stroke-width="0.9"><path d="M8.6 273.2A3.7 3.7 0 1 1 12.6 274.6"/><path d="M13.6 269.6L15 271.6L12.8 272.2" fill="#f0654a" stroke-width="0.5"/></g>
<path d="M27.0 269.7L29.8 272.3L32.5 269.7" fill="none" stroke="#8a8a8a" stroke-width="0.9"/>
<g fill="none" stroke="#4a4a4a" stroke-width="0.9"><path d="M208 267.6H213L215 269.4V274.6H208Z"/><path d="M209.6 267.8V269.8H212.4V267.8M209.4 274.4V272H213.6V274.4" stroke-width="0.7"/><circle cx="227.4" cy="270" r="3"/><path d="M229.6 272.4L232.8 275.6"/></g>
<g fill="none" stroke="#3a3a3a" stroke-width="0.9"><rect x="9.6" y="311.8" width="6.2" height="6" rx="0.8"/><path d="M7.8 314V319.4Q7.8 320 8.4 320H13.6"/></g>
<g fill="none" stroke="#3a3a3a" stroke-width="0.9"><rect x="7.8" y="427.4" width="8.6" height="2.6" rx="0.6"/><rect x="7.8" y="432.8" width="8.6" height="2.6" rx="0.6"/><path d="M10 430V432.8M14.2 430V432.8"/></g>
<path d="M151.4 332.5L154.1 330.3L156.8 332.5M151.4 336.5L154.1 338.7L156.8 336.5" fill="none" stroke="#b5b5b5" stroke-width="0.8"/>
<path d="M151.4 350.1L154.1 347.9L156.8 350.1M151.4 354.1L154.1 356.3L156.8 354.1" fill="none" stroke="#b5b5b5" stroke-width="0.8"/>
<path d="M153.0 368.5L155.8 371.1L158.5 368.5" fill="none" stroke="#8a8a8a" stroke-width="0.9"/>
<g fill="none" stroke="#f0654a" stroke-width="0.9"><path d="M139.4 371.4A3.4 3.4 0 1 1 143 373.0"/><path d="M144 368.2L145.4 370.2L143.2 370.8" fill="#f0654a" stroke-width="0.5"/></g>
<path d="M150.6 449.7L152.8 451.7L156.4 447.5" fill="none" stroke="#fff" stroke-width="1.1"/>
<path d="M150.6 467.3L152.8 469.3L156.4 465.1" fill="none" stroke="#fff" stroke-width="1.1"/>
<path d="M153.0 536.5L155.8 539.0L158.5 536.5" fill="none" stroke="#8a8a8a" stroke-width="0.9"/>
<path d="M150.6 573.2L152.8 575.2L156.4 571.0" fill="none" stroke="#fff" stroke-width="1.1"/>
<path d="M150.6 626.2L152.8 628.2L156.4 624.0" fill="none" stroke="#fff" stroke-width="1.1"/>
</svg>
</div>
<div id="sidegap"></div>
<div class="abs" style="left:738px;top:40px;width:269px;height:216px">
<div class="b" style="left:0.0px;top:0.0px;width:269.0px;height:18.3px;background:rgba(20,20,20,0.885)"></div>
<div class="b" style="left:0.0px;top:18.3px;width:269.0px;height:197.2px;background:rgba(38,38,38,0.857)"></div>
<div class="t" style="left:6.8px;top:9.4px;font-size:8.4px;color:#fff;font-weight:bold;letter-spacing:-0.524px;">Slicing Result</div>
<div class="t" style="left:6.8px;top:25.6px;font-size:8.4px;color:#fff;font-weight:bold;letter-spacing:-0.615px;">Color Scheme</div>
<div class="b" style="left:60.9px;top:20.6px;width:116.0px;height:12.0px;background:#2c2c2c;border-radius:2px"></div>
<div class="t" style="left:75.7px;top:27.4px;font-size:8.4px;color:#e6e6e6;letter-spacing:-0.363px;">Filament</div>
<div class="t" style="left:6.8px;top:40.2px;font-size:8.4px;color:#fff;font-weight:bold;letter-spacing:-0.492px;">Filament</div>
<div class="t" style="left:134.6px;top:40.2px;font-size:8.4px;color:#fff;font-weight:bold;letter-spacing:-0.513px;">Model</div>
<div class="b" style="left:0.0px;top:45.6px;width:269.0px;height:1.0px;background:#9a9a9a"></div>
<div class="b" style="left:7.7px;top:51.0px;width:4.4px;height:4.4px;background:#363636"></div>
<div class="t" style="left:18.0px;top:53.8px;font-size:8.1px;color:#ececec;">1</div>
<div class="t" style="left:134.6px;top:53.8px;font-size:8.1px;color:#ececec;letter-spacing:-0.427px;">1.71 m</div>
<div class="t" style="left:165.5px;top:53.8px;font-size:8.1px;color:#ececec;letter-spacing:-0.169px;">5.11 g</div>
<div class="t" style="left:6.8px;top:66.2px;font-size:8.1px;color:#ececec;letter-spacing:-0.153px;">Filament change times:  0</div>
<div class="t" style="left:6.8px;top:77.4px;font-size:8.1px;color:#ececec;letter-spacing:-0.224px;">Cost:  0.10</div>
<div class="t" style="left:6.8px;top:93.6px;font-size:8.4px;color:#fff;font-weight:bold;letter-spacing:-0.488px;">Time Estimation</div>
<div class="b" style="left:0.0px;top:100.2px;width:269.0px;height:1.0px;background:#9a9a9a"></div>
<div class="t" style="left:7.0px;top:107.4px;font-size:8.1px;color:#ececec;letter-spacing:-0.209px;">Prepare time:</div>
<div class="t" style="left:80.0px;top:107.4px;font-size:8.1px;color:#ececec;letter-spacing:-0.342px;">8m16s</div>
<div class="t" style="left:7.0px;top:118.6px;font-size:8.1px;color:#ececec;letter-spacing:-0.074px;">Model printing time:</div>
<div class="t" style="left:80.0px;top:118.6px;font-size:8.1px;color:#ececec;letter-spacing:-0.236px;">11m14s</div>
<div class="t" style="left:7.0px;top:129.7px;font-size:8.1px;color:#ececec;letter-spacing:-0.065px;">Total time:</div>
<div class="t" style="left:80.0px;top:129.7px;font-size:8.1px;color:#ececec;letter-spacing:-0.336px;">19m31s</div>
<div class="t" style="left:7.0px;top:142.9px;font-size:8.4px;color:#fff;font-weight:bold;letter-spacing:-0.532px;">Options</div>
<div class="t" style="left:134.6px;top:142.9px;font-size:8.4px;color:#fff;font-weight:bold;letter-spacing:-0.525px;">Display</div>
<div class="b" style="left:0.0px;top:149.0px;width:269.0px;height:1.0px;background:#9a9a9a"></div>
<div class="b" style="left:7.3px;top:153.4px;width:5.2px;height:5.2px;background:#3c4ba6"></div>
<div class="t" style="left:17.5px;top:156.4px;font-size:8.1px;color:#ececec;letter-spacing:-0.200px;">Travel</div>
<div class="b" style="left:137.0px;top:151.5px;width:9.0px;height:9.0px;background:#585858"></div>
<div class="b" style="left:7.3px;top:165.7px;width:5.2px;height:5.2px;background:#d022d0"></div>
<div class="t" style="left:17.5px;top:168.7px;font-size:8.1px;color:#ececec;letter-spacing:-0.172px;">Retract</div>
<div class="b" style="left:137.0px;top:163.8px;width:9.0px;height:9.0px;background:#585858"></div>
<div class="b" style="left:7.3px;top:178.2px;width:5.2px;height:5.2px;background:#3fb0d6"></div>
<div class="t" style="left:17.5px;top:181.2px;font-size:8.1px;color:#ececec;letter-spacing:-0.090px;">Unretract</div>
<div class="b" style="left:137.0px;top:176.3px;width:9.0px;height:9.0px;background:#585858"></div>
<div class="b" style="left:7.3px;top:190.6px;width:5.2px;height:5.2px;background:#f6f600"></div>
<div class="t" style="left:17.5px;top:193.6px;font-size:8.1px;color:#ececec;letter-spacing:-0.214px;">Wipe</div>
<div class="b" style="left:137.0px;top:188.7px;width:9.0px;height:9.0px;background:#585858"></div>
<div class="b" style="left:7.3px;top:202.9px;width:5.2px;height:5.2px;background:#ececec"></div>
<div class="t" style="left:17.5px;top:205.9px;font-size:8.1px;color:#ececec;letter-spacing:-0.562px;">Seams</div>
<div class="b" style="left:137.0px;top:201.0px;width:9.0px;height:9.0px;background:#585858"></div>
<svg class="abs" style="left:-738px;top:-40px" width="1080" height="627" viewBox="0 0 1080 627"><path d="M995.6 48.2L999 45.6L1002.4 48.2M995.6 51.4L999 48.8L1002.4 51.4" fill="none" stroke="#e6e6e6" stroke-width="0.9"/>
<path d="M802.2 66.6L805.3 68.6L808.4 66.6" fill="none" stroke="#e0e0e0" stroke-width="0.9"/>
<path d="M876.8 245.6L878.8 247.6L882.4 243.2" fill="none" stroke="#00ae42" stroke-width="1.2"/></svg>
</div>
<svg class="abs" style="left:0;top:0" width="1080" height="627" viewBox="0 0 1080 627"><!--CORNERS--><path d="M0 0H3.5A3.5 3.5 0 0 0 0 3.5ZM0 627V624A3 3 0 0 0 3 627ZM1080 0H1076.5A3.5 3.5 0 0 1 1080 3.5Z" fill="#000"/></svg>
</body>
</html>
